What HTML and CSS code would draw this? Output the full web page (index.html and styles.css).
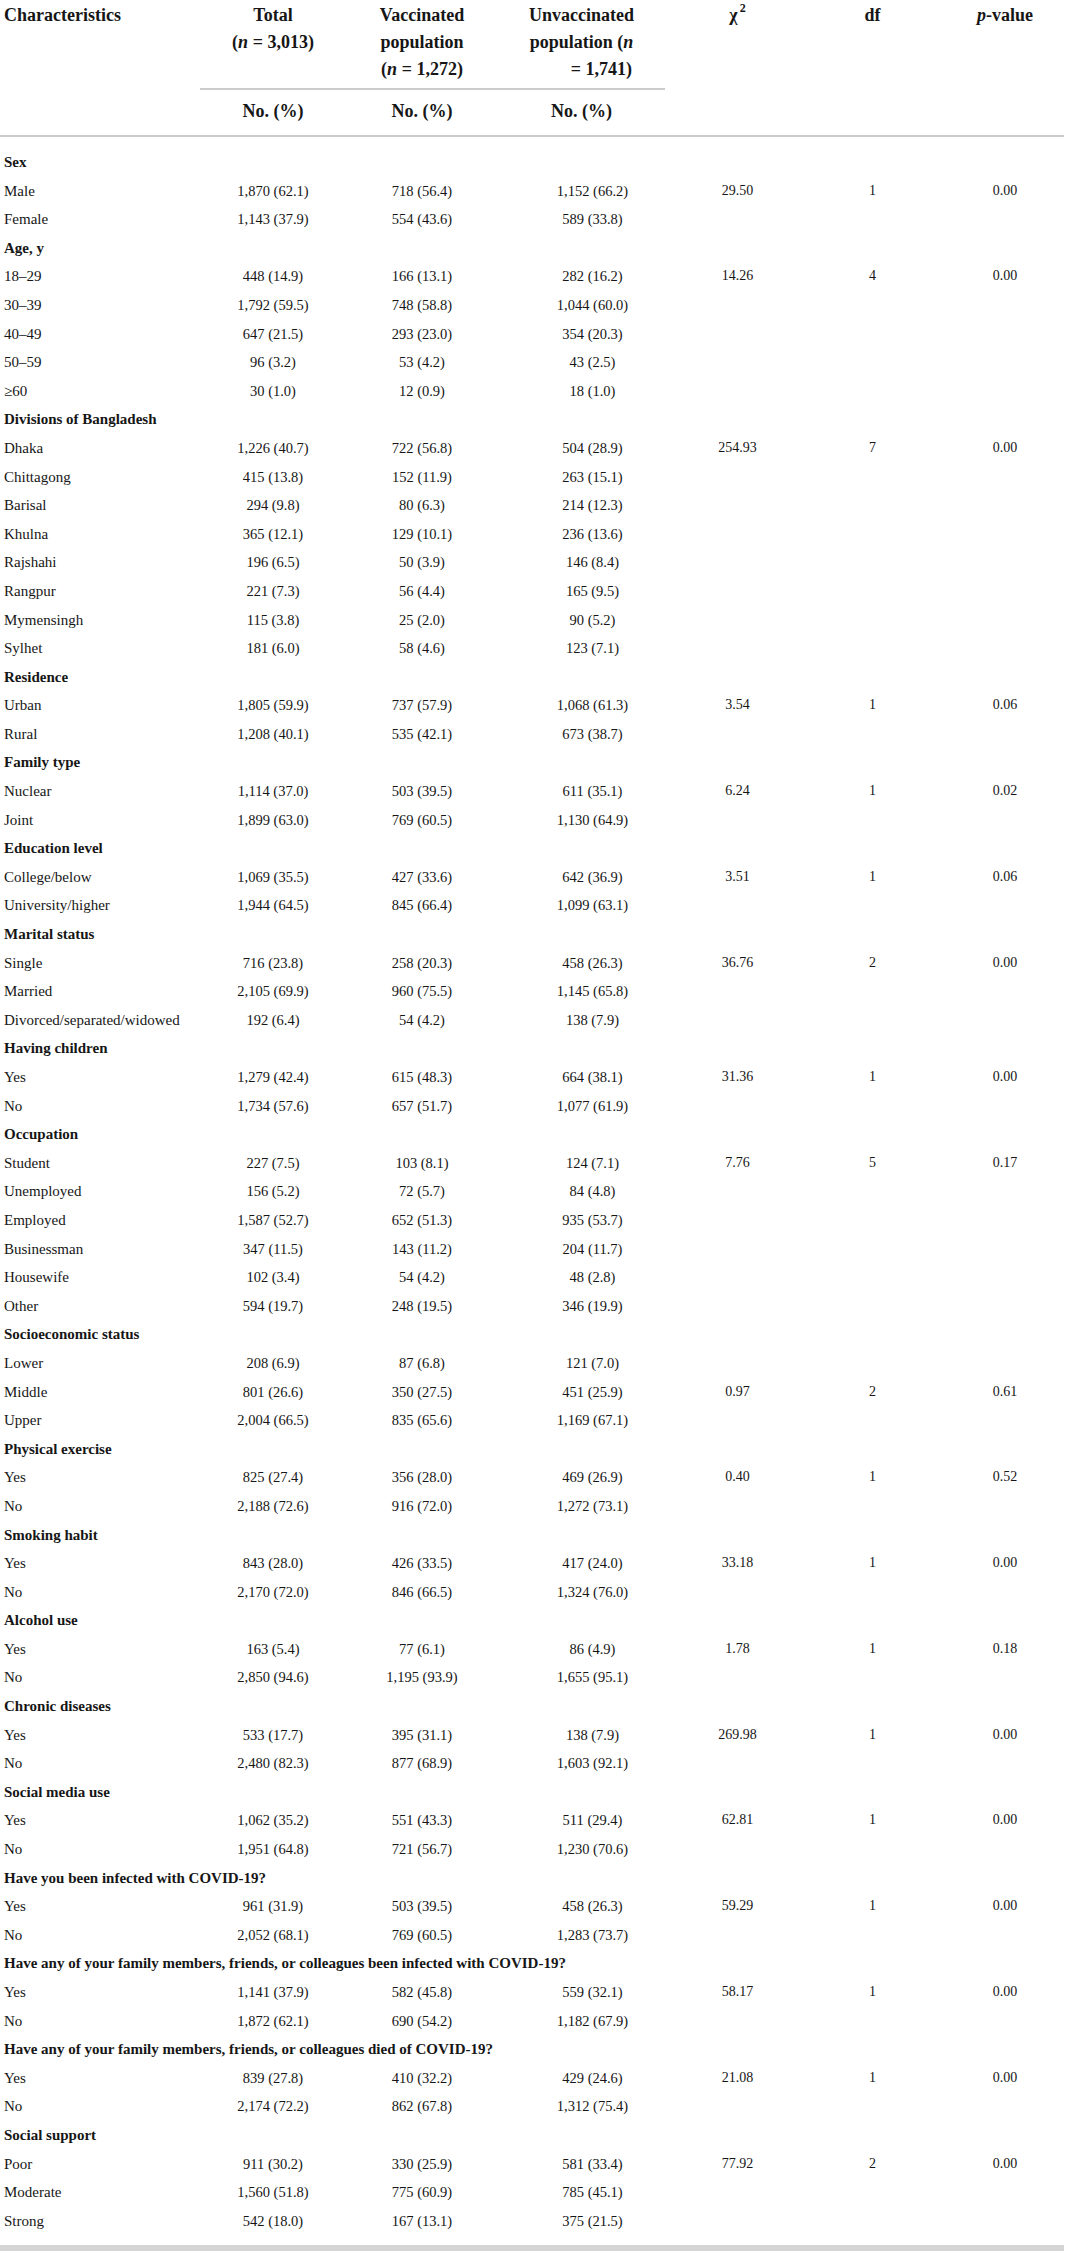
FILE: index.html
```html
<!DOCTYPE html>
<html lang="en">
<head>
  <meta charset="UTF-8">
  <meta name="viewport" content="width=device-width, initial-scale=1.0">
  <title>Characteristics of vaccinated and unvaccinated population</title>
  <link rel="stylesheet" href="styles.css">
</head>
<body>
  <table class="stats-table">
    <colgroup>
      <col class="c-label">
      <col class="c-total">
      <col class="c-vac">
      <col class="c-unvac">
      <col class="c-chi">
      <col class="c-df">
      <col class="c-p">
    </colgroup>
    <thead>
      <tr class="head-top">
        <th class="label-head" rowspan="2">Characteristics</th>
        <th class="group-head">Total<br>(<i>n</i> = 3,013)</th>
        <th class="group-head">Vaccinated<br>population<br>(<i>n</i> = 1,272)</th>
        <th class="group-head unvac-head">Unvaccinated<br>population (<i>n</i><br><span class="shift">= 1,741)</span></th>
        <th class="stat-head" rowspan="2">χ<sup>2</sup></th>
        <th class="stat-head" rowspan="2">df</th>
        <th class="stat-head p-head" rowspan="2"><i>p</i>-value</th>
      </tr>
      <tr class="head-sub">
        <th>No. (%)</th>
        <th>No. (%)</th>
        <th class="unvac-head">No. (%)</th>
      </tr>
    </thead>
    <tbody>
      <tr class="group first"><td colspan="7">Sex</td></tr>
      <tr><td>Male</td><td>1,870 (62.1)</td><td>718 (56.4)</td><td>1,152 (66.2)</td><td>29.50</td><td>1</td><td>0.00</td></tr>
      <tr><td>Female</td><td>1,143 (37.9)</td><td>554 (43.6)</td><td>589 (33.8)</td><td></td><td></td><td></td></tr>

      <tr class="group"><td colspan="7">Age, y</td></tr>
      <tr><td>18–29</td><td>448 (14.9)</td><td>166 (13.1)</td><td>282 (16.2)</td><td>14.26</td><td>4</td><td>0.00</td></tr>
      <tr><td>30–39</td><td>1,792 (59.5)</td><td>748 (58.8)</td><td>1,044 (60.0)</td><td></td><td></td><td></td></tr>
      <tr><td>40–49</td><td>647 (21.5)</td><td>293 (23.0)</td><td>354 (20.3)</td><td></td><td></td><td></td></tr>
      <tr><td>50–59</td><td>96 (3.2)</td><td>53 (4.2)</td><td>43 (2.5)</td><td></td><td></td><td></td></tr>
      <tr><td>≥60</td><td>30 (1.0)</td><td>12 (0.9)</td><td>18 (1.0)</td><td></td><td></td><td></td></tr>

      <tr class="group"><td colspan="7">Divisions of Bangladesh</td></tr>
      <tr><td>Dhaka</td><td>1,226 (40.7)</td><td>722 (56.8)</td><td>504 (28.9)</td><td>254.93</td><td>7</td><td>0.00</td></tr>
      <tr><td>Chittagong</td><td>415 (13.8)</td><td>152 (11.9)</td><td>263 (15.1)</td><td></td><td></td><td></td></tr>
      <tr><td>Barisal</td><td>294 (9.8)</td><td>80 (6.3)</td><td>214 (12.3)</td><td></td><td></td><td></td></tr>
      <tr><td>Khulna</td><td>365 (12.1)</td><td>129 (10.1)</td><td>236 (13.6)</td><td></td><td></td><td></td></tr>
      <tr><td>Rajshahi</td><td>196 (6.5)</td><td>50 (3.9)</td><td>146 (8.4)</td><td></td><td></td><td></td></tr>
      <tr><td>Rangpur</td><td>221 (7.3)</td><td>56 (4.4)</td><td>165 (9.5)</td><td></td><td></td><td></td></tr>
      <tr><td>Mymensingh</td><td>115 (3.8)</td><td>25 (2.0)</td><td>90 (5.2)</td><td></td><td></td><td></td></tr>
      <tr><td>Sylhet</td><td>181 (6.0)</td><td>58 (4.6)</td><td>123 (7.1)</td><td></td><td></td><td></td></tr>

      <tr class="group"><td colspan="7">Residence</td></tr>
      <tr><td>Urban</td><td>1,805 (59.9)</td><td>737 (57.9)</td><td>1,068 (61.3)</td><td>3.54</td><td>1</td><td>0.06</td></tr>
      <tr><td>Rural</td><td>1,208 (40.1)</td><td>535 (42.1)</td><td>673 (38.7)</td><td></td><td></td><td></td></tr>

      <tr class="group"><td colspan="7">Family type</td></tr>
      <tr><td>Nuclear</td><td>1,114 (37.0)</td><td>503 (39.5)</td><td>611 (35.1)</td><td>6.24</td><td>1</td><td>0.02</td></tr>
      <tr><td>Joint</td><td>1,899 (63.0)</td><td>769 (60.5)</td><td>1,130 (64.9)</td><td></td><td></td><td></td></tr>

      <tr class="group"><td colspan="7">Education level</td></tr>
      <tr><td>College/below</td><td>1,069 (35.5)</td><td>427 (33.6)</td><td>642 (36.9)</td><td>3.51</td><td>1</td><td>0.06</td></tr>
      <tr><td>University/higher</td><td>1,944 (64.5)</td><td>845 (66.4)</td><td>1,099 (63.1)</td><td></td><td></td><td></td></tr>

      <tr class="group"><td colspan="7">Marital status</td></tr>
      <tr><td>Single</td><td>716 (23.8)</td><td>258 (20.3)</td><td>458 (26.3)</td><td>36.76</td><td>2</td><td>0.00</td></tr>
      <tr><td>Married</td><td>2,105 (69.9)</td><td>960 (75.5)</td><td>1,145 (65.8)</td><td></td><td></td><td></td></tr>
      <tr><td>Divorced/separated/widowed</td><td>192 (6.4)</td><td>54 (4.2)</td><td>138 (7.9)</td><td></td><td></td><td></td></tr>

      <tr class="group"><td colspan="7">Having children</td></tr>
      <tr><td>Yes</td><td>1,279 (42.4)</td><td>615 (48.3)</td><td>664 (38.1)</td><td>31.36</td><td>1</td><td>0.00</td></tr>
      <tr><td>No</td><td>1,734 (57.6)</td><td>657 (51.7)</td><td>1,077 (61.9)</td><td></td><td></td><td></td></tr>

      <tr class="group"><td colspan="7">Occupation</td></tr>
      <tr><td>Student</td><td>227 (7.5)</td><td>103 (8.1)</td><td>124 (7.1)</td><td>7.76</td><td>5</td><td>0.17</td></tr>
      <tr><td>Unemployed</td><td>156 (5.2)</td><td>72 (5.7)</td><td>84 (4.8)</td><td></td><td></td><td></td></tr>
      <tr><td>Employed</td><td>1,587 (52.7)</td><td>652 (51.3)</td><td>935 (53.7)</td><td></td><td></td><td></td></tr>
      <tr><td>Businessman</td><td>347 (11.5)</td><td>143 (11.2)</td><td>204 (11.7)</td><td></td><td></td><td></td></tr>
      <tr><td>Housewife</td><td>102 (3.4)</td><td>54 (4.2)</td><td>48 (2.8)</td><td></td><td></td><td></td></tr>
      <tr><td>Other</td><td>594 (19.7)</td><td>248 (19.5)</td><td>346 (19.9)</td><td></td><td></td><td></td></tr>

      <tr class="group"><td colspan="7">Socioeconomic status</td></tr>
      <tr><td>Lower</td><td>208 (6.9)</td><td>87 (6.8)</td><td>121 (7.0)</td><td></td><td></td><td></td></tr>
      <tr><td>Middle</td><td>801 (26.6)</td><td>350 (27.5)</td><td>451 (25.9)</td><td>0.97</td><td>2</td><td>0.61</td></tr>
      <tr><td>Upper</td><td>2,004 (66.5)</td><td>835 (65.6)</td><td>1,169 (67.1)</td><td></td><td></td><td></td></tr>

      <tr class="group"><td colspan="7">Physical exercise</td></tr>
      <tr><td>Yes</td><td>825 (27.4)</td><td>356 (28.0)</td><td>469 (26.9)</td><td>0.40</td><td>1</td><td>0.52</td></tr>
      <tr><td>No</td><td>2,188 (72.6)</td><td>916 (72.0)</td><td>1,272 (73.1)</td><td></td><td></td><td></td></tr>

      <tr class="group"><td colspan="7">Smoking habit</td></tr>
      <tr><td>Yes</td><td>843 (28.0)</td><td>426 (33.5)</td><td>417 (24.0)</td><td>33.18</td><td>1</td><td>0.00</td></tr>
      <tr><td>No</td><td>2,170 (72.0)</td><td>846 (66.5)</td><td>1,324 (76.0)</td><td></td><td></td><td></td></tr>

      <tr class="group"><td colspan="7">Alcohol use</td></tr>
      <tr><td>Yes</td><td>163 (5.4)</td><td>77 (6.1)</td><td>86 (4.9)</td><td>1.78</td><td>1</td><td>0.18</td></tr>
      <tr><td>No</td><td>2,850 (94.6)</td><td>1,195 (93.9)</td><td>1,655 (95.1)</td><td></td><td></td><td></td></tr>

      <tr class="group"><td colspan="7">Chronic diseases</td></tr>
      <tr><td>Yes</td><td>533 (17.7)</td><td>395 (31.1)</td><td>138 (7.9)</td><td>269.98</td><td>1</td><td>0.00</td></tr>
      <tr><td>No</td><td>2,480 (82.3)</td><td>877 (68.9)</td><td>1,603 (92.1)</td><td></td><td></td><td></td></tr>

      <tr class="group"><td colspan="7">Social media use</td></tr>
      <tr><td>Yes</td><td>1,062 (35.2)</td><td>551 (43.3)</td><td>511 (29.4)</td><td>62.81</td><td>1</td><td>0.00</td></tr>
      <tr><td>No</td><td>1,951 (64.8)</td><td>721 (56.7)</td><td>1,230 (70.6)</td><td></td><td></td><td></td></tr>

      <tr class="group"><td colspan="7">Have you been infected with COVID-19?</td></tr>
      <tr><td>Yes</td><td>961 (31.9)</td><td>503 (39.5)</td><td>458 (26.3)</td><td>59.29</td><td>1</td><td>0.00</td></tr>
      <tr><td>No</td><td>2,052 (68.1)</td><td>769 (60.5)</td><td>1,283 (73.7)</td><td></td><td></td><td></td></tr>

      <tr class="group"><td colspan="7">Have any of your family members, friends, or colleagues been infected with COVID-19?</td></tr>
      <tr><td>Yes</td><td>1,141 (37.9)</td><td>582 (45.8)</td><td>559 (32.1)</td><td>58.17</td><td>1</td><td>0.00</td></tr>
      <tr><td>No</td><td>1,872 (62.1)</td><td>690 (54.2)</td><td>1,182 (67.9)</td><td></td><td></td><td></td></tr>

      <tr class="group"><td colspan="7">Have any of your family members, friends, or colleagues died of COVID-19?</td></tr>
      <tr><td>Yes</td><td>839 (27.8)</td><td>410 (32.2)</td><td>429 (24.6)</td><td>21.08</td><td>1</td><td>0.00</td></tr>
      <tr><td>No</td><td>2,174 (72.2)</td><td>862 (67.8)</td><td>1,312 (75.4)</td><td></td><td></td><td></td></tr>

      <tr class="group"><td colspan="7">Social support</td></tr>
      <tr><td>Poor</td><td>911 (30.2)</td><td>330 (25.9)</td><td>581 (33.4)</td><td>77.92</td><td>2</td><td>0.00</td></tr>
      <tr><td>Moderate</td><td>1,560 (51.8)</td><td>775 (60.9)</td><td>785 (45.1)</td><td></td><td></td><td></td></tr>
      <tr class="last"><td>Strong</td><td>542 (18.0)</td><td>167 (13.1)</td><td>375 (21.5)</td><td></td><td></td><td></td></tr>
    </tbody>
  </table>
</body>
</html>
```

FILE: styles.css
```css
body {
  margin: 0;
  background: #fff;
  color: #161616;
  font-family: "Liberation Serif", "Times New Roman", serif;
}

.stats-table {
  width: 1064px;
  table-layout: fixed;
  border-collapse: separate;
  border-spacing: 0;
  border-bottom: 6px solid #d5d5d5;
}
.c-label { width: 200px; }
.c-total { width: 146px; }
.c-vac { width: 152px; }
.c-unvac { width: 167px; }
.c-chi { width: 145px; }
.c-df { width: 125px; }
.c-p { width: 129px; }

/* header */
th {
  font-size: 18px;
  font-weight: bold;
  line-height: 27px;
  text-align: center;
  vertical-align: top;
  padding: 0;
}
.head-top th {
  padding-top: 2px;
}
.head-top .group-head {
  padding-bottom: 5px;
  border-bottom: 2px solid #cbcbcb;
}
.label-head {
  text-align: left;
  padding-left: 4px;
}
.label-head,
.stat-head,
.head-sub th {
  border-bottom: 2px solid #cbcbcb;
}
.head-sub th {
  padding: 8px 0 10px;
}
.head-top .unvac-head,
.head-sub .unvac-head {
  padding-left: 10px;
  padding-right: 10px;
}
.unvac-head .shift {
  padding-left: 40px;
}
.p-head {
  padding-left: 11px;
}
.stat-head sup {
  font-size: 12px;
  line-height: 0;
  vertical-align: 9px;
  margin-left: 2px;
}

/* body */
td {
  padding: 0;
  line-height: 28.6px;
  font-size: 14.5px;
  text-align: center;
  white-space: nowrap;
}
td:first-child {
  text-align: left;
  padding-left: 4px;
  font-size: 15px;
}
td:nth-child(4) {
  padding-left: 22px;
}
td:nth-child(5),
td:nth-child(6),
td:nth-child(7) {
  font-size: 14px;
}
td:nth-child(7) {
  padding-left: 11px;
}
.group td {
  font-weight: bold;
  font-size: 15px;
}
.first td {
  padding-top: 11px;
}
.last td {
  padding-bottom: 10px;
}
```
